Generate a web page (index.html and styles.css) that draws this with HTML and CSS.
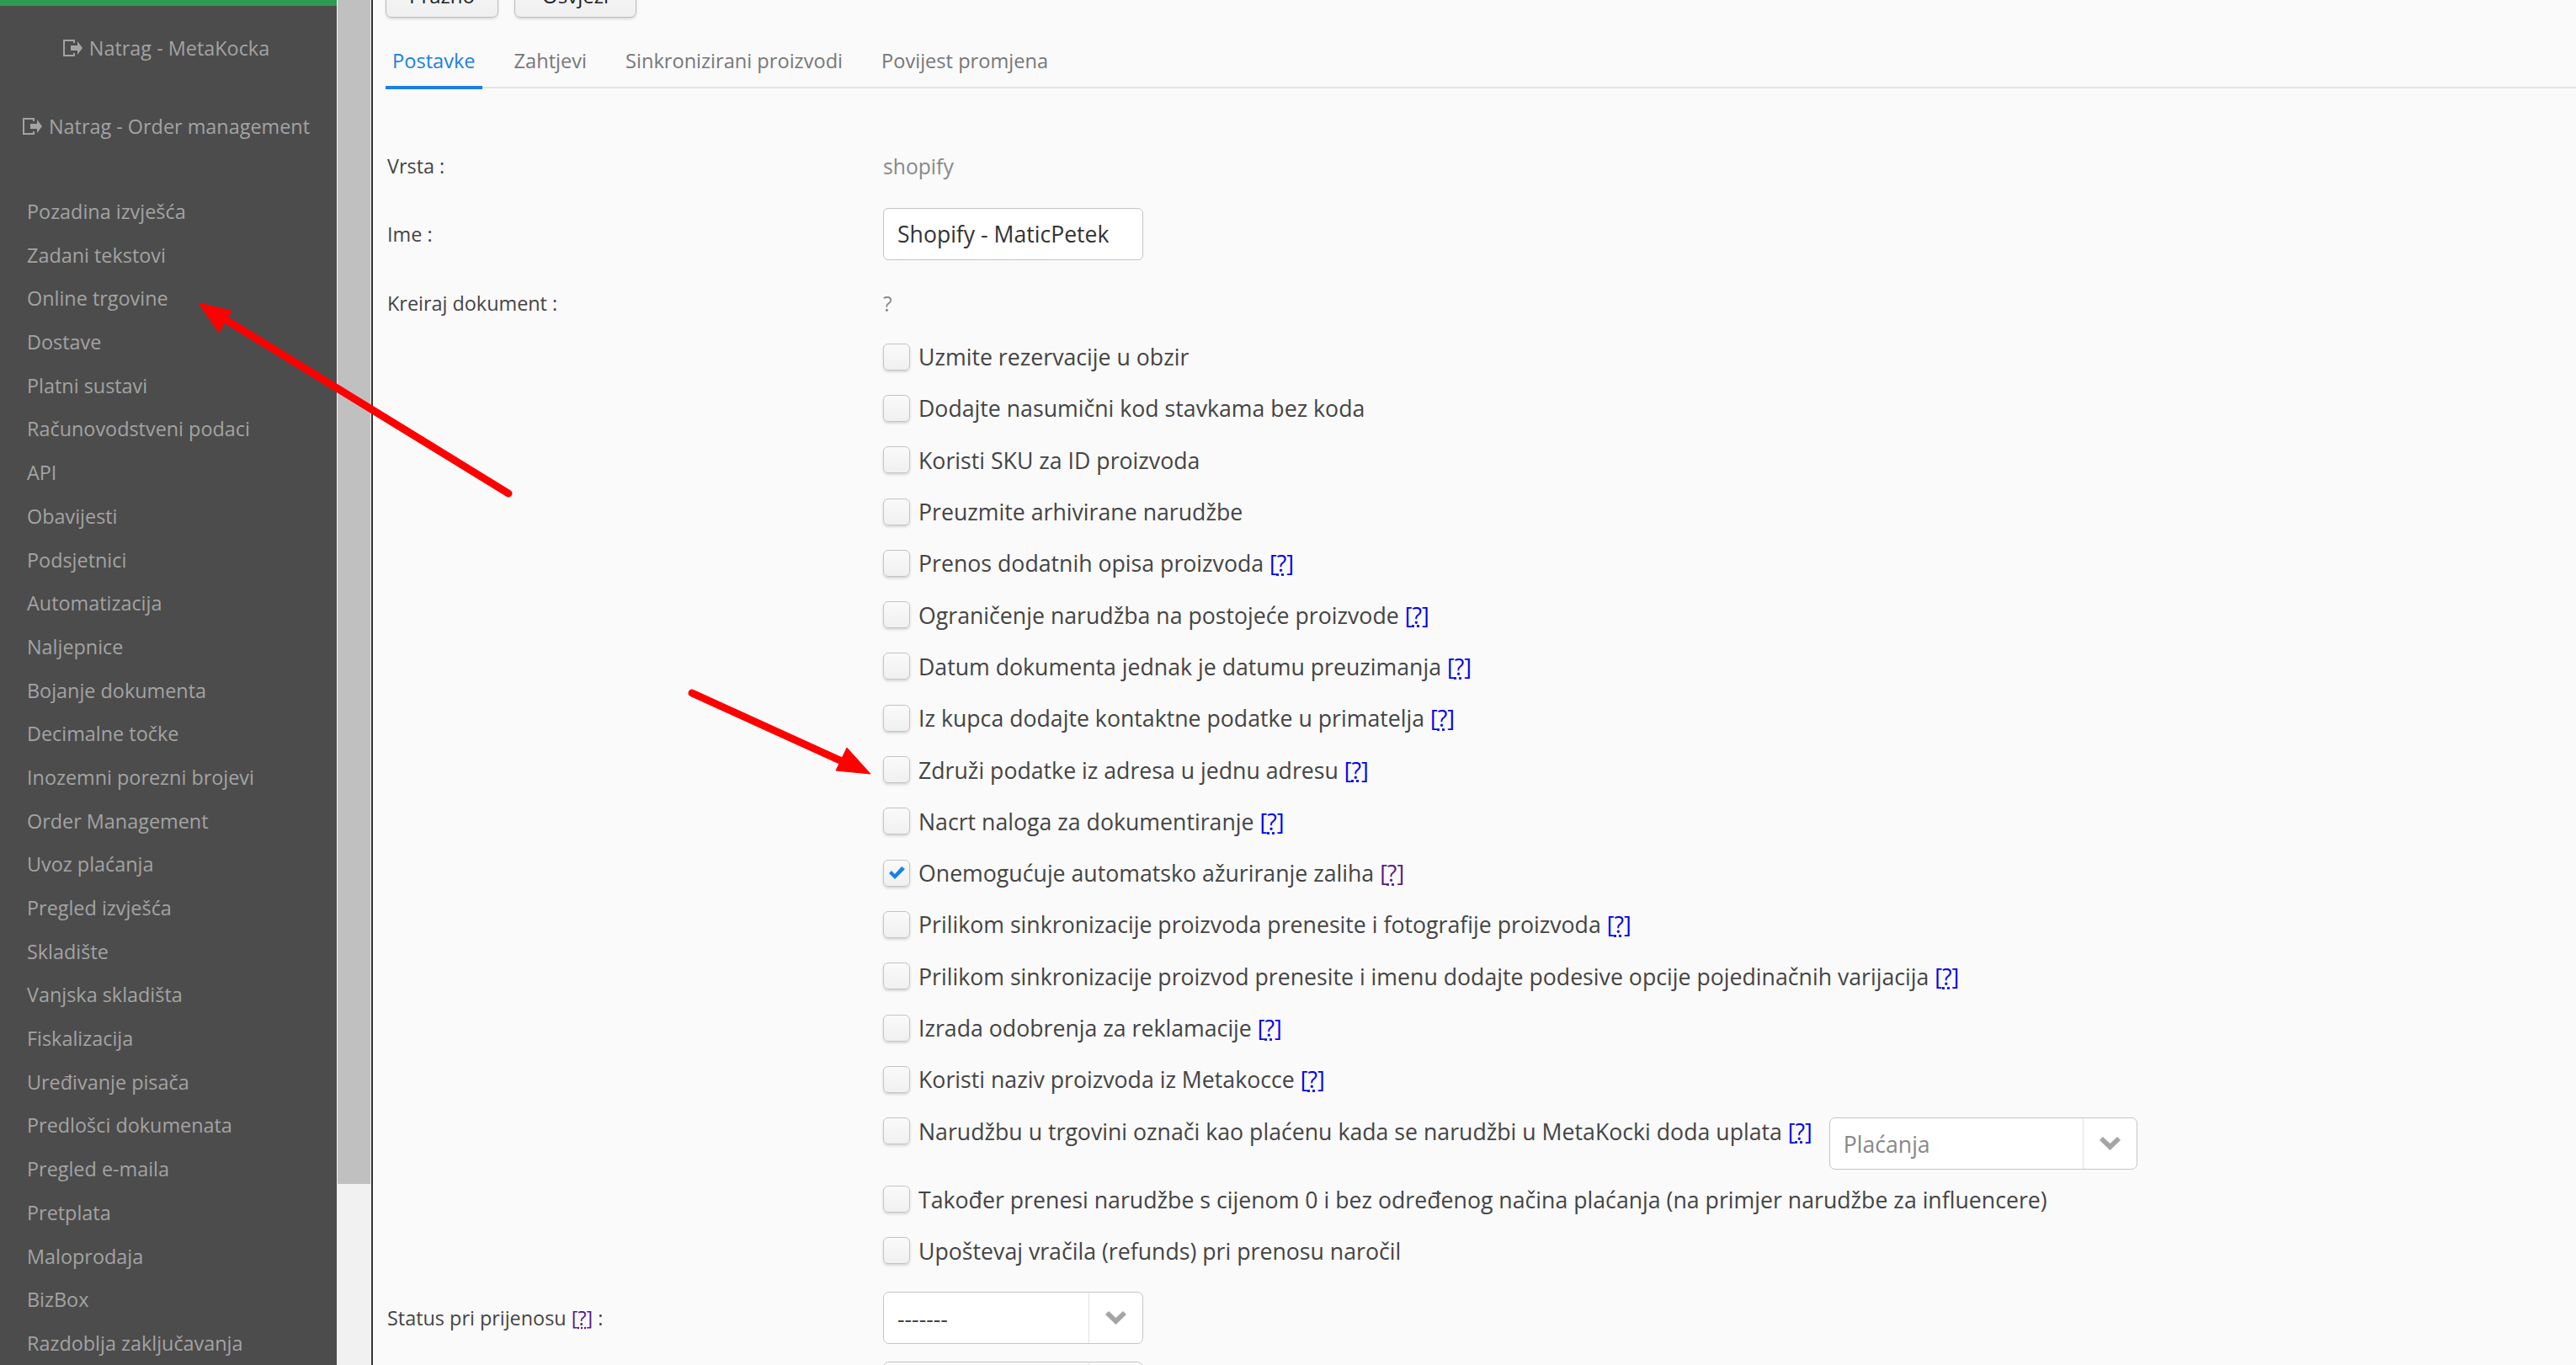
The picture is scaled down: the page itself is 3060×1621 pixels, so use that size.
FILE: index.html
```html
<!DOCTYPE html>
<html lang="hr">
<head>
<meta charset="utf-8">
<title>Postavke</title>
<link rel="stylesheet" href="styles.css">
</head>
<body>
<div class="app">
  <aside class="sidebar">
    <div class="topbar"></div>
    <a class="back back-first"><svg class="back-icon" viewBox="0 0 23 20"><path class="door" d="M13 4V1H1v18h12v-3"/><path d="M9 7h8V2l6 8-6 8v-5H9z"/></svg>Natrag - MetaKocka</a>
    <a class="back back-second"><svg class="back-icon" viewBox="0 0 23 20"><path class="door" d="M13 4V1H1v18h12v-3"/><path d="M9 7h8V2l6 8-6 8v-5H9z"/></svg>Natrag - Order management</a>
    <nav class="menu">
      <a>Pozadina izvješća</a><a>Zadani tekstovi</a><a>Online trgovine</a><a>Dostave</a><a>Platni sustavi</a><a>Računovodstveni podaci</a><a>API</a><a>Obavijesti</a><a>Podsjetnici</a><a>Automatizacija</a><a>Naljepnice</a><a>Bojanje dokumenta</a><a>Decimalne točke</a><a>Inozemni porezni brojevi</a><a>Order Management</a><a>Uvoz plaćanja</a><a>Pregled izvješća</a><a>Skladište</a><a>Vanjska skladišta</a><a>Fiskalizacija</a><a>Uređivanje pisača</a><a>Predlošci dokumenata</a><a>Pregled e-maila</a><a>Pretplata</a><a>Maloprodaja</a><a>BizBox</a><a>Razdoblja zaključavanja</a>
    </nav>
  </aside>
  <div class="scrollbar"><div class="thumb"></div></div>
  <main class="main">
    <div class="toolbar"><button class="btn btn-a">Prazno</button><button class="btn btn-b">Osvježi</button></div>
    <div class="tabs">
      <a class="tab active">Postavke</a><a class="tab">Zahtjevi</a><a class="tab">Sinkronizirani proizvodi</a><a class="tab">Povijest promjena</a>
    </div>
    <div class="form">
      <div class="field f-vrsta"><label class="lbl">Vrsta :</label><span class="static">shopify</span></div>
      <div class="field f-ime"><label class="lbl">Ime :</label><div class="input">Shopify - MaticPetek</div></div>
      <div class="field f-kreiraj"><label class="lbl">Kreiraj dokument :</label><span class="static">?</span></div>
      <div class="checks">
        <div class="check"><span class="box"></span>Uzmite rezervacije u obzir</div>
        <div class="check"><span class="box"></span>Dodajte nasumični kod stavkama bez koda</div>
        <div class="check"><span class="box"></span>Koristi SKU za ID proizvoda</div>
        <div class="check"><span class="box"></span>Preuzmite arhivirane narudžbe</div>
        <div class="check"><span class="box"></span>Prenos dodatnih opisa proizvoda <a class="help">[<u>?</u>]</a></div>
        <div class="check"><span class="box"></span>Ograničenje narudžba na postojeće proizvode <a class="help">[<u>?</u>]</a></div>
        <div class="check"><span class="box"></span>Datum dokumenta jednak je datumu preuzimanja <a class="help">[<u>?</u>]</a></div>
        <div class="check"><span class="box"></span>Iz kupca dodajte kontaktne podatke u primatelja <a class="help">[<u>?</u>]</a></div>
        <div class="check"><span class="box"></span>Združi podatke iz adresa u jednu adresu <a class="help">[<u>?</u>]</a></div>
        <div class="check"><span class="box"></span>Nacrt naloga za dokumentiranje <a class="help">[<u>?</u>]</a></div>
        <div class="check"><span class="box checked"><svg class="tick" viewBox="0 0 19 15"><path d="M0 8l3-3 4 4 8-9 4 3L7 15z"/></svg></span>Onemogućuje automatsko ažuriranje zaliha <a class="help visited">[<u>?</u>]</a></div>
        <div class="check"><span class="box"></span>Prilikom sinkronizacije proizvoda prenesite i fotografije proizvoda <a class="help">[<u>?</u>]</a></div>
        <div class="check"><span class="box"></span>Prilikom sinkronizacije proizvod prenesite i imenu dodajte podesive opcije pojedinačnih varijacija <a class="help">[<u>?</u>]</a></div>
        <div class="check"><span class="box"></span>Izrada odobrenja za reklamacije <a class="help">[<u>?</u>]</a></div>
        <div class="check"><span class="box"></span>Koristi naziv proizvoda iz Metakocce <a class="help">[<u>?</u>]</a></div>
        <div class="check check-select">
          <div class="check-line"><span class="box"></span>Narudžbu u trgovini označi kao plaćenu kada se narudžbi u MetaKocki doda uplata <a class="help">[<u>?</u>]</a></div>
          <div class="select select-pay"><span class="sel-text muted">Plaćanja</span><span class="sel-arrow"><svg class="chev" viewBox="0 0 25 16"><path d="M4 0l8.500 8 8.500-8 4 4-12.500 12L0 4z"/></svg></span></div>
        </div>
        <div class="check"><span class="box"></span>Također prenesi narudžbe s cijenom 0 i bez određenog načina plaćanja (na primjer narudžbe za influencere)</div>
        <div class="check"><span class="box"></span>Upoštevaj vračila (refunds) pri prenosu naročil</div>
      </div>
      <div class="field f-status"><label class="lbl">Status pri prijenosu <a class="help visited">[<u>?</u>]</a> :</label>
        <div class="select"><span class="sel-text">-------</span><span class="sel-arrow"><svg class="chev" viewBox="0 0 25 16"><path d="M4 0l8.500 8 8.500-8 4 4-12.500 12L0 4z"/></svg></span></div>
      </div>
      <div class="field f-next"><label class="lbl"></label>
        <div class="select"><span class="sel-text"></span><span class="sel-arrow"></span></div>
      </div>
    </div>
  </main>
</div>
<svg class="annot" viewBox="0 0 3060 1621">
  <g fill="#fe0000" stroke="#fe0000">
    <path d="M604 586L262 376" stroke-width="9" stroke-linecap="round"/>
    <path d="M236 360l39 9-15 26z" stroke-width="1"/>
    <path d="M822 823L1000 904" stroke-width="9" stroke-linecap="round"/>
    <path d="M1034 919l-41-4 13-27z" stroke-width="1"/>
  </g>
</svg>
</body>
</html>
```
FILE: styles.css
```css
* { box-sizing: border-box; }
html, body { margin: 0; height: 100%; overflow: hidden; }
body { font-family: "Open Sans", sans-serif; font-size: 23.6px; color: #444; background: #fafafa; }
.app { display: flex; height: 1621px; overflow: hidden; }

.sidebar { width: 400px; flex: none; background: #4c4c4c; color: #a3a3a3; font-size: 23.4px; }
.topbar { height: 7px; background: #2b9c50; }
.back { display: flex; align-items: center; justify-content: center; height: 30px; padding-right: 5px; }
.back-first { margin-top: 35px; }
.back-second { margin-top: 63px; }
.back-icon { width: 23px; height: 20px; margin-right: 8px; fill: #a3a3a3; }
.door { fill: none; stroke: #a3a3a3; stroke-width: 2; }
.menu { display: flex; flex-direction: column; margin-top: 61px; padding-left: 32px; }
.menu a { height: 51.7px; line-height: 51.7px; white-space: nowrap; }

.scrollbar { width: 41px; flex: none; background: #f1f1f1; padding: 0 1px; }
.thumb { width: 39px; height: 1406px; background: #c0c0c0; }

.main { flex: 1; border-left: 2px solid #333; padding-left: 15px; min-width: 0; }
.toolbar { display: flex; gap: 19px; margin-top: -40px; height: 61px; }
.btn { height: 61px; padding: 8px 0 0; border: 1px solid #bbb; border-radius: 7px; background: linear-gradient(#fafafa, #efefef); box-shadow: 0 2px 3px rgba(0,0,0,.12); font: 24px "Open Sans", sans-serif; color: #222; }
.btn-a { width: 134px; }
.btn-b { width: 145px; }

.tabs { display: flex; margin-top: 29px; height: 55px; border-bottom: 2px solid #e3e3e3; }
.tab { height: 56px; padding: 0 8px; margin-right: 30px; color: #777; line-height: 44px; }
.tab.active { color: #1a80e6; border-bottom: 4px solid #1a80e6; }

.field { display: flex; align-items: center; }
.lbl { width: 591px; flex: none; padding-left: 2px; font-size: 23.4px; }
.static { color: #888; font-size: 24.7px; }
.f-vrsta { margin-top: 72px; height: 40px; }
.f-ime { margin-top: 30px; }
.f-kreiraj { margin-top: 31px; height: 40px; }
.input { width: 309px; height: 62px; line-height: 60px; padding: 0 16px; background: #fff; border: 1px solid #c4c4c4; border-radius: 6px; color: #333; font-size: 26.6px; white-space: nowrap; }

.checks { padding-left: 591px; margin-top: 13px; }
.check, .check-line { display: flex; align-items: center; min-height: 61.3px; font-size: 26.7px; white-space: pre-wrap; }
.box { flex: none; width: 32px; height: 32px; margin-right: 10px; border: 1px solid #c4c4c4; border-radius: 6px; background: linear-gradient(#fafafa, #f0f0f0); box-shadow: 0 2px 3px rgba(0,0,0,.14); display: flex; align-items: center; justify-content: center; }
.tick { width: 19px; height: 15px; fill: #1a80e6; }
.help { color: #0000ee; }
.help u { text-decoration: underline dotted; }
.help.visited { color: #551a8b; }
.check-select { min-height: 81px; align-items: flex-start; }

.select { display: flex; width: 309px; height: 62px; background: #fff; border: 1px solid #c4c4c4; border-radius: 7px; }
.select-pay { width: 366px; margin: 15px 0 0 20px; }
.sel-text { flex: 1; padding-left: 16px; line-height: 62px; font-size: 26.6px; color: #444; }
.muted { color: #888; }
.sel-arrow { width: 64px; flex: none; border-left: 1px solid #e3e3e3; display: flex; align-items: center; justify-content: center; }
.chev { width: 25px; height: 16px; fill: #a5a5a5; }
.f-status { margin-top: 18px; }
.f-next { margin-top: 21px; }

.annot { position: absolute; left: 0; top: 0; width: 3060px; height: 1621px; pointer-events: none; }
```
